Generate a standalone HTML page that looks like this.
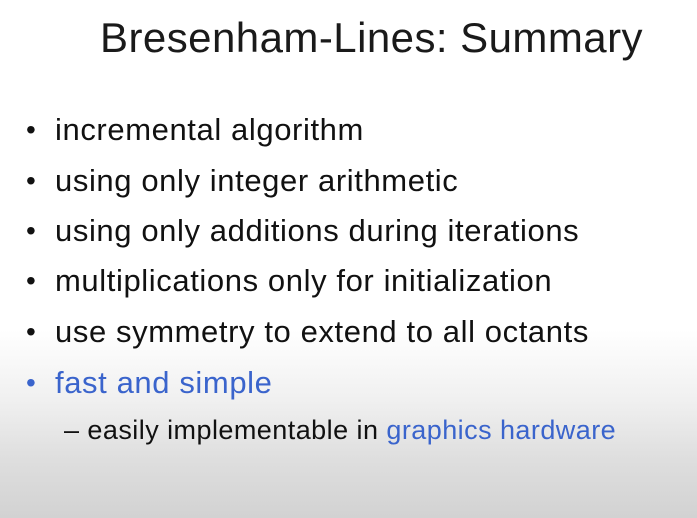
<!DOCTYPE html>
<html><head><style>
html,body{margin:0;padding:0}
body{width:697px;height:518px;overflow:hidden;position:relative;font-family:"Liberation Sans",sans-serif;
background:linear-gradient(to bottom,#fff 0px,#fff 330px,#f0f0f0 400px,#dedede 460px,#d2d2d2 518px);}
.t{position:absolute;left:100px;top:14px;font-size:42px;color:#1a1a1a;white-space:nowrap;letter-spacing:0.45px}
.l{position:absolute;left:55px;font-size:31px;color:#111;white-space:nowrap;letter-spacing:0.6px;line-height:30px}
.b{position:absolute;left:26px;font-size:28px;color:#111;line-height:30px}
.blue{color:#3a64cc}
</style></head><body>
<div class="t">Bresenham-Lines: Summary</div>
<div class="b" style="top:115px">•</div><div class="l" style="top:115px">incremental algorithm</div>
<div class="b" style="top:166px">•</div><div class="l" style="top:166px">using only integer arithmetic</div>
<div class="b" style="top:216px">•</div><div class="l" style="top:216px">using only additions during iterations</div>
<div class="b" style="top:266px">•</div><div class="l" style="top:266px">multiplications only for initialization</div>
<div class="b" style="top:317px">•</div><div class="l" style="top:317px">use symmetry to extend to all octants</div>
<div class="b blue" style="top:368px">•</div><div class="l blue" style="top:368px">fast and simple</div>
<div class="l" style="top:415px;left:64px;font-size:27px;letter-spacing:0.45px">– easily implementable in <span class="blue">graphics hardware</span></div>
</body></html>
